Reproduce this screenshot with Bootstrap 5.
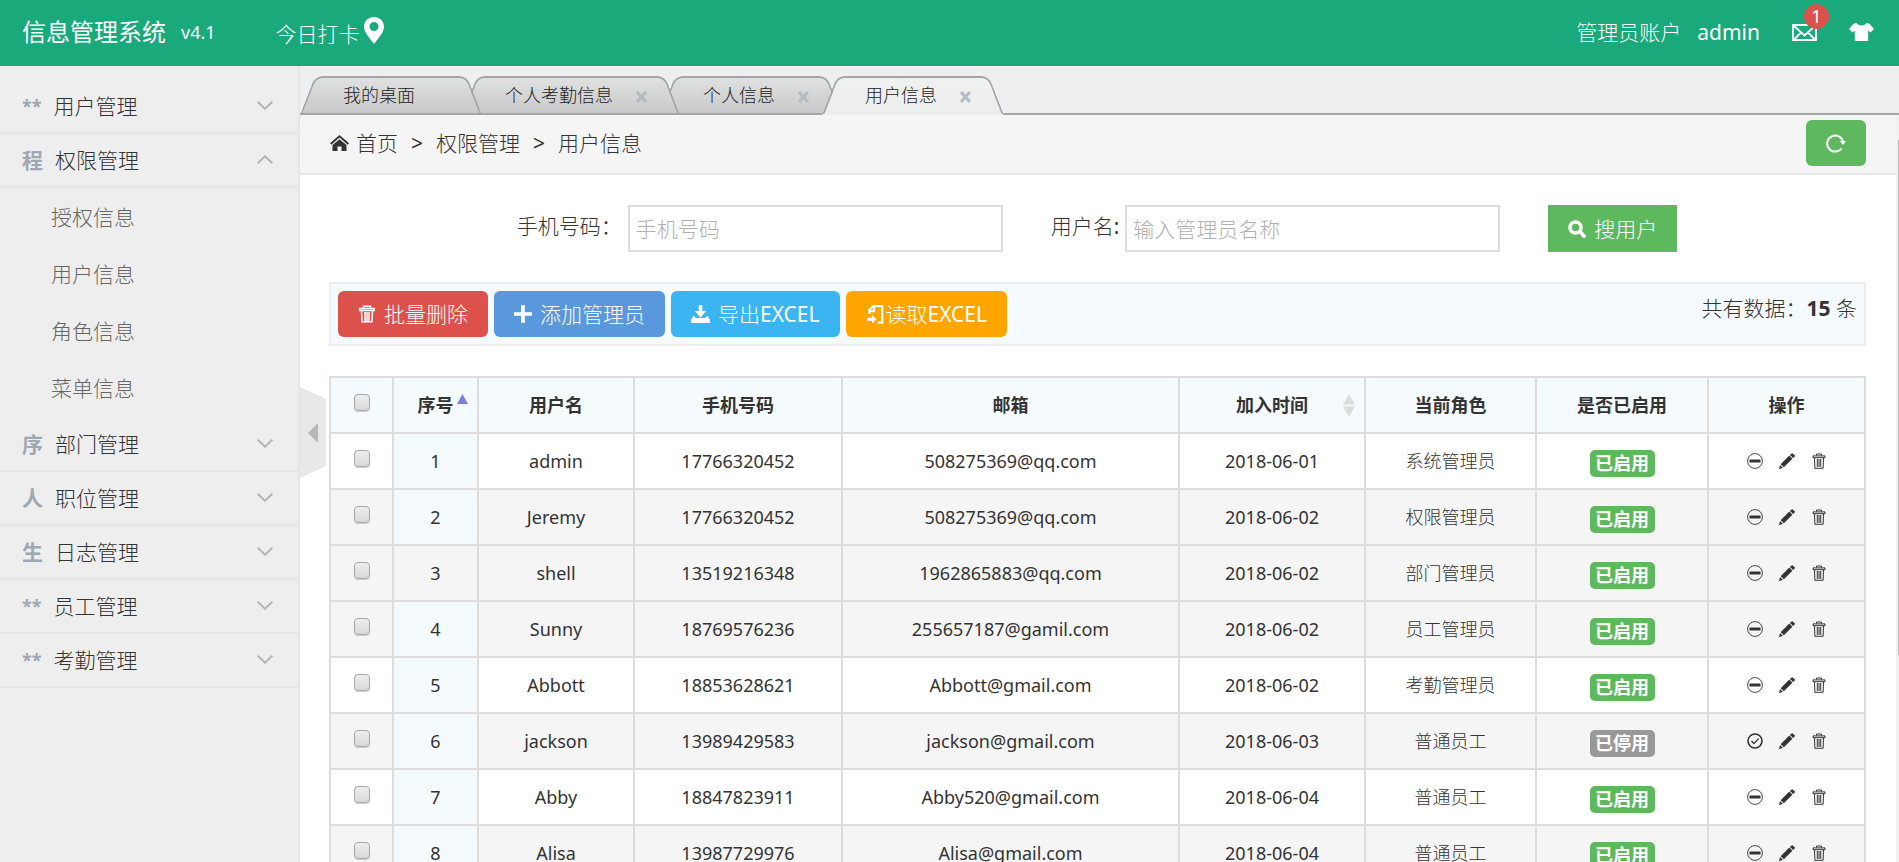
<!DOCTYPE html>
<html lang="zh-CN">
<head>
<meta charset="utf-8">
<meta name="viewport" content="width=device-width, initial-scale=1">
<title>信息管理系统 v4.1</title>
<link href="https://cdn.jsdelivr.net/npm/bootstrap@5.3.0/dist/css/bootstrap.min.css" rel="stylesheet">
<style>
body{font-family:"Noto Sans","Noto Sans CJK SC Light","Noto Sans CJK SC",sans-serif;font-size:21px;line-height:30px;color:#333;background:#fff}
a{color:inherit;text-decoration:none}
svg{display:block;fill:currentColor;flex:none}
b,.brand-name,.user-grid th,.state{font-family:"Noto Sans","Noto Sans CJK SC",sans-serif}
/* top bar */
.topbar{height:66px;flex:none;background:#19a97b;color:#fff;padding:0 25px 2px 22px}
.brand-name{font-size:24px}
.brand-ver{font-size:18px;padding:0 60px 0 15px}
.msg-count{position:absolute;left:20px;top:-20px;width:25px;height:25px;border-radius:50%;background:#dd514c;font-size:18px;line-height:25px;text-align:center}
/* sidebar */
.side{width:300px;flex:none;background:#eee;border-right:2px solid #e5e5e5;padding-top:14px}
.side-head{height:54px;width:100%;border:0;border-bottom:2px solid #e5e5e5;background:none;padding:0 25px 1px 22px;color:#333;text-align:left}
.side-head b{color:#a0a7b3;margin-right:12px}
.side-head .star{font-size:18px}
.side-head svg{width:16px;height:9px;margin-left:auto;fill:none;stroke:#b5b5b5;stroke-width:2}
.side-head[aria-expanded=true] svg{transform:rotate(180deg)}
.side-sub{padding:1px 0 1px 51px;color:#666}
.side-sub a{display:block;line-height:57px}
.fold{position:absolute;left:300px;top:387px;width:26px;height:91px;background:none;border:0;padding:0;z-index:5}
/* tabs */
.tabbar{height:49px;flex:none;background:#efeef0;border-bottom:2px solid #a5a5a5;padding-top:10px}
.page-tab{position:relative;height:39px;padding-left:43px;font-size:18px;line-height:38px;color:#222;isolation:isolate;display:flex;margin-right:-19px}
.page-tab::before,.page-tab::after{content:"";position:absolute;z-index:-1;top:0;bottom:0;width:50%;background:linear-gradient(#dfe0df,#c9c9cb);border:solid #a5a5a5;border-width:2px 0}
.page-tab::before{left:0;border-left-width:2px;border-top-left-radius:8px;transform:skewX(-21deg);transform-origin:0 100%}
.page-tab::after{right:0;border-right-width:2px;border-top-right-radius:8px;transform:skewX(21deg);transform-origin:100% 100%}
.page-tab.on::before,.page-tab.on::after{background:linear-gradient(#eff1ef,#ededee);border-bottom-color:#ededee}
.tab-end{width:66px;padding:3px 0 0 23px;border:0;background:none;color:#b5bbc2}
.tab-end svg{width:11px;height:12px;fill:none;stroke:currentColor;stroke-width:3}
/* breadcrumb */
.crumbs{height:60px;background:#f5f5f5;border-bottom:2px solid #e5e5e5;padding:0 30px 2px}
.crumbs span{margin:0 13px}
.crumbs .home{margin-right:7px}
.btn-refresh{width:60px;height:46px;background:#5eb95e;border:0;border-radius:6px;color:#fff}
/* search */
.search{padding:30px 2px 0 0}
.search label{padding-top:6px;margin-right:6px}
.field{width:375px;height:47px;border:2px solid #ddd;padding:0 6px;color:#333;outline:0}
.field::placeholder{color:#b0b0b0;opacity:1}
.btn-find{height:47px;background:#5eb95e;border:0;color:#fff;padding:0 20px}
/* toolbar */
.listing{padding:30px 30px 0 29px}
.toolbar{height:64px;border:2px solid #eee;background:#f5fafe;padding:7px 7px 0;margin-bottom:30px}
.tools{gap:6px}
.tool{height:46px;border:0;border-radius:6px;color:#fff;padding:0 20px}
.total{padding-top:2px}
.bg-del{background:#dd514c}.bg-add{background:#5a98de}.bg-exp{background:#3bb4f2}.bg-imp{background:orange}
/* grid */
.user-grid{table-layout:fixed;width:100%;border-collapse:collapse;font-size:18px;line-height:26px;text-align:center}
.user-grid th,.user-grid td{border:2px solid #ddd;height:56px;padding:0;vertical-align:middle}
.user-grid th{background:#f5fafe;position:relative;font-weight:700}
.user-grid tr.alt td{background:#f5f5f5}
.user-grid td.sorted{background:#f5fafe !important}
.sorter{position:absolute;right:9px;top:16px}
.tick{appearance:none;display:block;width:16px;height:17px;margin:-5px auto 0;border:1px solid #a8a8a8;border-radius:4px;background:linear-gradient(#eee,#d8d8d8);box-shadow:0 1px 1px #ccc}
.state{display:block;width:65px;line-height:27px;margin:5px auto 0;border-radius:5px;background:#5eb95e;color:#fff;font-weight:700}
.state.off{background:#999}
.ops button{border:0;background:none;padding:0;color:#333}
.ops svg{width:16px;height:16px}
/* scroll rail */
.rail{width:3px;flex:none;background:#f1f1f1;padding:25px 0 0 2px}
.rail i{display:block;height:515px;background:#bbb}
</style>
</head>
<body class="vh-100 overflow-hidden d-flex flex-column position-relative">
<svg width="0" height="0" class="position-absolute">
<symbol id="i-stop" viewBox="0 0 16 16"><circle cx="8" cy="8" r="7.400" fill="none" stroke="currentColor" stroke-width=".9"/><path d="M2.500 6.500h11v3h-11z"/></symbol>
<symbol id="i-ok" viewBox="0 0 16 16"><circle cx="8" cy="8" r="7" fill="none" stroke="currentColor" stroke-width="1.600"/><path d="M4.500 8l2.500 2.600 4.600-5" fill="none" stroke="currentColor" stroke-width="1.400"/></symbol>
<symbol id="i-edit" viewBox="0 0 16 16"><path d="M0 16l1-4 3 3zM1.700 11.200l8.600-8.600 3.100 3.100-8.600 8.600zM11 1.900L12.500.4q.6-.5 1.200 0l1.900 1.900q.6.600 0 1.200L14.100 5z"/></symbol>
<symbol id="i-trash" viewBox="0 0 16 16"><path d="M5.500 2.500V1h5v1.500M2 2.900h12v1.800H2zM3.500 5l.4 10.300h8.200L12.500 5M6.300 6v8M8 6v8M9.700 6v8" fill="none" stroke="currentColor"/></symbol>
<symbol id="i-down" viewBox="0 0 16 9"><path d="M.7.700L8 7.700 15.300.7"/></symbol>
<symbol id="i-x" viewBox="0 0 11 12"><path d="M1 1l9 10M10 1L1 11"/></symbol>
</svg>

<header class="topbar d-flex align-items-center">
  <a href="#" class="brand-name">信息管理系统</a>
  <span class="brand-ver">v4.1</span>
  <a href="#" class="d-flex align-items-center"><span class="pt-1">今日打卡</span><svg class="ms-1 mb-1" width="20" height="27" viewBox="0 0 20 27"><path fill-rule="evenodd" d="M10 0c5.800 0 10 4.300 10 9.800 0 3-1.500 5.600-3 8L10 27 3 17.800c-1.500-2.400-3-5-3-8C0 4.300 4.200 0 10 0zm0 5a4.500 4.500 0 100 9 4.500 4.500 0 000-9z"/></svg></a>
  <nav class="ms-auto d-flex align-items-center">
    <span>管理员账户</span>
    <a href="#" class="ms-3">admin</a>
    <a href="#" class="position-relative ms-4 ps-2" aria-label="消息"><svg width="25" height="17" viewBox="0 0 25 17"><path d="M1 1h23v15H1zM1.500 1.500l11 10 11-10M2 15.500l7-7M23 15.500l-7-7" fill="none" stroke="#fff" stroke-width="1.800"/></svg><span class="msg-count">1</span></a>
    <a href="#" class="ms-4 ps-2" aria-label="换肤"><svg width="25" height="18" viewBox="0 0 25 18"><path d="M7.500 0c1 3.200 9 3.200 10 0l3 .8L25 6l-3.500 3.500-2.300-2V18H5.800V7.500l-2.300 2L0 6 4.500.8z"/></svg></a>
  </nav>
</header>

<div class="d-flex flex-fill overflow-hidden">
  <aside class="side">
    <button class="side-head d-flex align-items-center" aria-expanded="false"><b class="star">**</b>用户管理<svg><use href="#i-down"/></svg></button>
    <button class="side-head d-flex align-items-center" aria-expanded="true"><b>程</b>权限管理<svg><use href="#i-down"/></svg></button>
    <nav class="side-sub"><a href="#">授权信息</a><a href="#">用户信息</a><a href="#">角色信息</a><a href="#">菜单信息</a></nav>
    <button class="side-head d-flex align-items-center" aria-expanded="false"><b>序</b>部门管理<svg><use href="#i-down"/></svg></button>
    <button class="side-head d-flex align-items-center" aria-expanded="false"><b>人</b>职位管理<svg><use href="#i-down"/></svg></button>
    <button class="side-head d-flex align-items-center" aria-expanded="false"><b>生</b>日志管理<svg><use href="#i-down"/></svg></button>
    <button class="side-head d-flex align-items-center" aria-expanded="false"><b class="star">**</b>员工管理<svg><use href="#i-down"/></svg></button>
    <button class="side-head d-flex align-items-center" aria-expanded="false"><b class="star">**</b>考勤管理<svg><use href="#i-down"/></svg></button>
  </aside>
  <button class="fold" aria-label="收起菜单"><svg width="26" height="91" viewBox="0 0 26 91"><path fill="#e8e8e8" d="M0 0l24 11q2 1 2 3v63q0 2-2 3L0 91z"/><path fill="#b8b8b8" d="M18 36v20L8 46z"/></svg></button>

  <div class="flex-fill d-flex flex-column overflow-hidden">
    <div class="tabbar d-flex">
      <div class="page-tab z-3"><a href="#">我的桌面</a><span class="tab-end"></span></div>
      <div class="page-tab z-2"><a href="#">个人考勤信息</a><button class="tab-end" aria-label="关闭"><svg><use href="#i-x"/></svg></button></div>
      <div class="page-tab z-1"><a href="#">个人信息</a><button class="tab-end" aria-label="关闭"><svg><use href="#i-x"/></svg></button></div>
      <div class="page-tab on z-3"><a href="#">用户信息</a><button class="tab-end" aria-label="关闭"><svg><use href="#i-x"/></svg></button></div>
    </div>
    <div class="d-flex flex-fill overflow-hidden">
      <main class="flex-fill overflow-hidden">
        <nav class="crumbs d-flex align-items-center">
          <svg class="home" width="19" height="16" viewBox="0 0 19 16"><path d="M9.500 0L19 8.300l-1.300 1.500-8.200-7.200-8.200 7.200L0 8.300zM9.500 4.200L16.500 10v6H11.500v-4.500h-4V16H2.500v-6z"/></svg>
          <a href="#">首页</a><span>&gt;</span><a href="#">权限管理</a><span>&gt;</span><a href="#">用户信息</a>
          <button class="btn-refresh ms-auto d-flex align-items-center justify-content-center" aria-label="刷新"><svg width="20" height="19" viewBox="0 0 20 19"><path d="M15.500 14.500A8 8 0 1117 8" fill="none" stroke="#fff" stroke-width="2"/><path d="M14 7h6l-3 4z"/></svg></button>
        </nav>
        <form class="search d-flex justify-content-center gap-5">
          <div class="d-flex"><label for="phone">手机号码：</label><input id="phone" class="field" type="text" placeholder="手机号码"></div>
          <div class="d-flex"><label for="uname">用户名:</label><input id="uname" class="field" type="text" placeholder="输入管理员名称"></div>
          <button type="button" class="btn-find d-flex align-items-center"><svg class="me-2" width="18" height="18" viewBox="0 0 18 18"><circle cx="7.500" cy="7.500" r="5.500" fill="none" stroke="#fff" stroke-width="3.500"/><path d="M11 13l2.500-2.500 4 4.200q1 1.500-.3 2.700-1.300 1-2.600 0z"/></svg>搜用户</button>
        </form>
        <section class="listing">
          <div class="toolbar d-flex justify-content-between">
            <div class="tools d-flex align-items-start">
              <button class="tool bg-del d-flex align-items-center"><svg class="me-2" width="18" height="18" viewBox="0 0 18 18"><path d="M5.500 2.800V1.200h7v1.600M1.800 3.500h14.400v2H1.800zM3.500 6l.5 10.800h10L14.500 6M7 7v9M9 7v9M11 7v9" fill="none" stroke="#fff" stroke-width="1.500"/></svg>批量删除</button>
              <button class="tool bg-add d-flex align-items-center"><svg class="me-2" width="18" height="18" viewBox="0 0 18 18"><path d="M7.200 0h3.600v7.200H18v3.600h-7.200V18H7.200v-7.200H0V7.200h7.200z"/></svg>添加管理员</button>
              <button class="tool bg-exp d-flex align-items-center"><svg class="me-2" width="19" height="18" viewBox="0 0 19 18"><path d="M7.700 0h3.600v6h4l-5.800 6.500L3.700 6h4zM2.500 10.500L5 13h9l2.500-2.500L19 15v3H0v-3z"/></svg>导出EXCEL</button>
              <button class="tool bg-imp d-flex align-items-center"><svg width="20" height="19" viewBox="0 0 20 19"><path d="M3.200 9V5l4-3.800h9v16.500h-4.500M4 6.200h4V1.500" fill="none" stroke="#fff" stroke-width="2.200"/><path d="M1 12.800h5V10l4.500 4.200L6 18.500v-2.700H1z"/></svg>读取EXCEL</button>
            </div>
            <span class="total">共有数据：<strong>15</strong> 条</span>
          </div>
          <table class="user-grid">
            <colgroup><col style="width:63px"><col style="width:85px"><col style="width:156px"><col style="width:208px"><col><col style="width:186px"><col style="width:171px"><col style="width:172px"><col style="width:157px"></colgroup>
            <thead><tr>
              <th><input type="checkbox" class="tick" aria-label="全选"></th>
              <th>序号<svg class="sorter" width="11" height="10" viewBox="0 0 11 10"><path fill="#7c80dc" d="M5.500 0L11 10H0z"/></svg></th>
              <th>用户名</th><th>手机号码</th><th>邮箱</th>
              <th>加入时间<svg class="sorter" width="12" height="23" viewBox="0 0 12 23"><path fill="#dcdcde" d="M6 0l6 10.500H0zM0 12.500h12L6 23z"/></svg></th>
              <th>当前角色</th><th>是否已启用</th><th>操作</th>
            </tr></thead>
            <tbody>
            <tr><td><input type="checkbox" class="tick" aria-label="1"></td><td class="sorted">1</td><td>admin</td><td>17766320452</td><td>508275369@qq.com</td><td>2018-06-01</td><td>系统管理员</td><td><span class="state">已启用</span></td><td><div class="ops d-flex justify-content-center gap-3"><button aria-label="停用"><svg><use href="#i-stop"/></svg></button><button aria-label="编辑"><svg><use href="#i-edit"/></svg></button><button aria-label="删除"><svg><use href="#i-trash"/></svg></button></div></td></tr>
            <tr class="alt"><td><input type="checkbox" class="tick" aria-label="2"></td><td class="sorted">2</td><td>Jeremy</td><td>17766320452</td><td>508275369@qq.com</td><td>2018-06-02</td><td>权限管理员</td><td><span class="state">已启用</span></td><td><div class="ops d-flex justify-content-center gap-3"><button aria-label="停用"><svg><use href="#i-stop"/></svg></button><button aria-label="编辑"><svg><use href="#i-edit"/></svg></button><button aria-label="删除"><svg><use href="#i-trash"/></svg></button></div></td></tr>
            <tr class="alt"><td><input type="checkbox" class="tick" aria-label="3"></td><td>3</td><td>shell</td><td>13519216348</td><td>1962865883@qq.com</td><td>2018-06-02</td><td>部门管理员</td><td><span class="state">已启用</span></td><td><div class="ops d-flex justify-content-center gap-3"><button aria-label="停用"><svg><use href="#i-stop"/></svg></button><button aria-label="编辑"><svg><use href="#i-edit"/></svg></button><button aria-label="删除"><svg><use href="#i-trash"/></svg></button></div></td></tr>
            <tr class="alt"><td><input type="checkbox" class="tick" aria-label="4"></td><td class="sorted">4</td><td>Sunny</td><td>18769576236</td><td>255657187@gamil.com</td><td>2018-06-02</td><td>员工管理员</td><td><span class="state">已启用</span></td><td><div class="ops d-flex justify-content-center gap-3"><button aria-label="停用"><svg><use href="#i-stop"/></svg></button><button aria-label="编辑"><svg><use href="#i-edit"/></svg></button><button aria-label="删除"><svg><use href="#i-trash"/></svg></button></div></td></tr>
            <tr><td><input type="checkbox" class="tick" aria-label="5"></td><td class="sorted">5</td><td>Abbott</td><td>18853628621</td><td>Abbott@gmail.com</td><td>2018-06-02</td><td>考勤管理员</td><td><span class="state">已启用</span></td><td><div class="ops d-flex justify-content-center gap-3"><button aria-label="停用"><svg><use href="#i-stop"/></svg></button><button aria-label="编辑"><svg><use href="#i-edit"/></svg></button><button aria-label="删除"><svg><use href="#i-trash"/></svg></button></div></td></tr>
            <tr class="alt"><td><input type="checkbox" class="tick" aria-label="6"></td><td class="sorted">6</td><td>jackson</td><td>13989429583</td><td>jackson@gmail.com</td><td>2018-06-03</td><td>普通员工</td><td><span class="state off">已停用</span></td><td><div class="ops d-flex justify-content-center gap-3"><button aria-label="启用"><svg><use href="#i-ok"/></svg></button><button aria-label="编辑"><svg><use href="#i-edit"/></svg></button><button aria-label="删除"><svg><use href="#i-trash"/></svg></button></div></td></tr>
            <tr><td><input type="checkbox" class="tick" aria-label="7"></td><td class="sorted">7</td><td>Abby</td><td>18847823911</td><td>Abby520@gmail.com</td><td>2018-06-04</td><td>普通员工</td><td><span class="state">已启用</span></td><td><div class="ops d-flex justify-content-center gap-3"><button aria-label="停用"><svg><use href="#i-stop"/></svg></button><button aria-label="编辑"><svg><use href="#i-edit"/></svg></button><button aria-label="删除"><svg><use href="#i-trash"/></svg></button></div></td></tr>
            <tr class="alt"><td><input type="checkbox" class="tick" aria-label="8"></td><td class="sorted">8</td><td>Alisa</td><td>13987729976</td><td>Alisa@gmail.com</td><td>2018-06-04</td><td>普通员工</td><td><span class="state">已启用</span></td><td><div class="ops d-flex justify-content-center gap-3"><button aria-label="停用"><svg><use href="#i-stop"/></svg></button><button aria-label="编辑"><svg><use href="#i-edit"/></svg></button><button aria-label="删除"><svg><use href="#i-trash"/></svg></button></div></td></tr>
            </tbody>
          </table>
        </section>
      </main>
      <div class="rail"><i></i></div>
    </div>
  </div>
</div>
<script src="https://cdn.jsdelivr.net/npm/bootstrap@5.3.0/dist/js/bootstrap.bundle.min.js"></script>
</body>
</html>
